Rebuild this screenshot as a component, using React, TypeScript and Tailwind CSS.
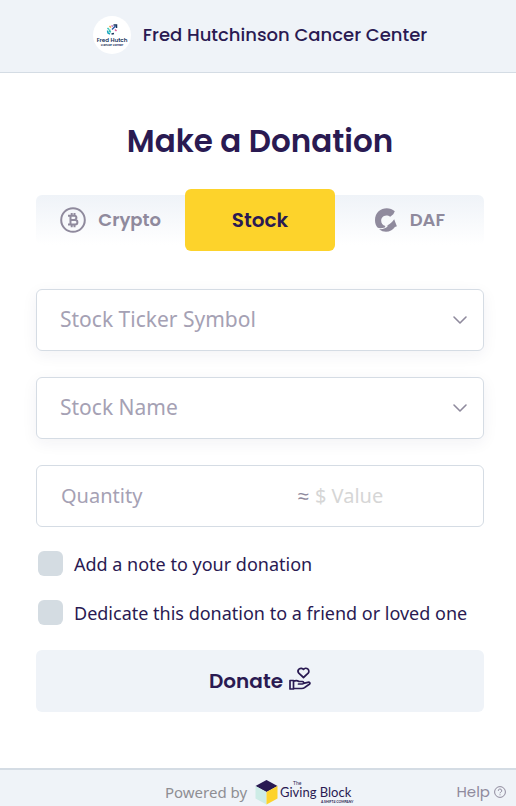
import React, { useState } from 'react';

type Tab = 'crypto' | 'stock' | 'daf';

const HEADING = "font-['Poppins','Inter',sans-serif]";

function OrgLogo() {
  return (
    <svg className="size-[38px] shrink-0" viewBox="0 0 38 38" role="img" aria-label="Fred Hutch Cancer Center">
      <circle cx="19" cy="19" r="19" fill="#fff" />
      <g fill="none" strokeWidth="1.5">
        <path d="M14.500 12l1.500 1.500" stroke="#35c4b5" />
        <path d="M16.500 10l1.500 1.500" stroke="#f2a33a" />
        <path d="M18.500 9.500l1.500 1" stroke="#b45bb5" />
        <path d="M20.500 9h3v3" stroke="#1b365d" />
        <path d="M19 13.500l3.500-3.500" stroke="#2b57a5" />
        <path d="M14.500 14.500l.5 2.500 2 1" stroke="#1aa5c0" />
        <path d="M17 13.500l-.5 2 1.500.5" stroke="#35c4b5" />
        <path d="M18.500 18l2.500-.5" stroke="#1b365d" />
        <path d="M22 13.500l1.500 1.500" stroke="#e0559a" />
      </g>
      <text x="19" y="26" textAnchor="middle" fontSize="5.6" fontWeight="600" fill="#1b365d" fontFamily="Poppins, Inter, sans-serif">Fred Hutch</text>
      <text x="19" y="30" textAnchor="middle" fontSize="3" fontWeight="600" fill="#1b365d" fontFamily="Poppins, Inter, sans-serif">Cancer Center</text>
    </svg>
  );
}

function BitcoinIcon() {
  return (
    <svg className="size-[26px]" viewBox="0 0 26 26" fill="none" stroke="currentColor" aria-hidden="true">
      <circle cx="13" cy="13" r="11.800" strokeWidth="2" />
      <path d="M8 8.700h6.300a2.100 2.100 0 0 1 0 4.200h-3.800h4.600a2.300 2.300 0 0 1 0 4.600H8M10.500 8.700v8.800M11.700 6v2.700M14.500 6v2.700M11.700 17.500v2.700M14.500 17.500v2.700" strokeWidth="2" />
    </svg>
  );
}

function DafIcon() {
  return (
    <svg className="h-[26px] w-6" viewBox="0 0 24 26" fill="currentColor" aria-hidden="true">
      <path d="M20.800 4.200C14-2 1 1.500 1 13.200c0 3 1 5.600 2.800 7.600 2 .6 4.500.4 7-.4l.6-1.500C5.500 18 5.800 8.600 12.300 8.500c1.600 0 2.800.4 3.900 1.300l3.100-2.600z" />
      <path d="M5 22.200c4 .2 7.300-.8 9.200-3.700l-1.700.2c3.500-1.500 5.700-3.400 7.700-6.400l.9 2.500 1.800 4.500-2 .6C17.500 25 10.500 26.500 5 22.200z" />
    </svg>
  );
}

function Chevron() {
  return (
    <svg className="pointer-events-none absolute top-1/2 right-4 w-4 -translate-y-1/2" viewBox="0 0 16 10" fill="none" aria-hidden="true">
      <path d="M2 2l6 6 6-6" stroke="#8f8a9d" strokeWidth="1.600" strokeLinecap="round" strokeLinejoin="round" />
    </svg>
  );
}

function DonateIcon() {
  return (
    <svg className="mb-1 h-6 w-[22px]" viewBox="0 0 22 24" fill="none" stroke="currentColor" strokeWidth="1.700" strokeLinecap="round" strokeLinejoin="round" aria-hidden="true">
      <path d="M14.500 10.500L9.800 6.200a2.900 2.900 0 0 1 4.700-3.800 2.900 2.900 0 0 1 4.700 3.800z" />
      <path d="M1 13.500h3.500V22H1zM4.500 14.300c2-1 4-.9 5.500.2h3.500c1.500 0 1.500 2.500 0 2.500H9.500M14.500 16.300l4.300-1c2-.4 2.700 1.100 1.500 2l-4.300 3c-1 .8-2 1.200-3.500 1.200h-8" />
    </svg>
  );
}

function GivingBlockLogo() {
  return (
    <svg className="h-[26px] w-[100px]" viewBox="0 0 100 26" role="img" aria-label="The Giving Block">
      <path d="M11.500 1L22.500 7l-11 6L.5 7z" fill="#2a1a52" />
      <path d="M.5 7l11 6v12.500L.5 19.500z" fill="#cdece6" />
      <path d="M22.500 7l-11 6v12.500l11-6z" fill="#fdd32b" />
      <text x="38" y="6" fontSize="5" fill="#2a1a52" fontFamily="Lato, sans-serif">The</text>
      <text x="25" y="18" fontSize="13" fill="#2a1a52" fontFamily="Lato, sans-serif">Giving Block</text>
      <text x="66" y="24" fontSize="3.4" fontWeight="700" fill="#2a1a52" fontFamily="Lato, sans-serif">A SHIFT4 COMPANY</text>
    </svg>
  );
}

function SelectField({ id, label, options }: { id: string; label: string; options: string[] }) {
  return (
    <div className="relative">
      <select
        id={id}
        aria-label={label}
        defaultValue=""
        className="block h-[62px] w-full appearance-none rounded-md border border-[#d5dce4] bg-white pr-12 pl-[23px] text-[21px] text-[#a5a1b4] shadow-[0_4px_16px_rgba(42,26,82,0.06)]"
      >
        <option value="">{label}</option>
        {options.map((o) => (
          <option key={o}>{o}</option>
        ))}
      </select>
      <Chevron />
    </div>
  );
}

function CheckboxRow({ label }: { label: string }) {
  return (
    <label className="flex items-center gap-[11px] pl-0.5 text-lg leading-6 text-[#2a1a52]">
      <input type="checkbox" className="size-[25px] shrink-0 appearance-none rounded-md bg-[#d4dce2] checked:bg-[#2a1a52]" />
      {label}
    </label>
  );
}

export default function App() {
  const [tab, setTab] = useState<Tab>('stock');

  const tabClass = (t: Tab) =>
    t === tab
      ? 'flex h-[62px] flex-1 items-center justify-center gap-3 rounded-md bg-[#fdd32b] text-xl font-semibold text-[#2a1a52]'
      : 'flex h-[50px] flex-1 items-center justify-center gap-3 text-lg font-semibold text-[#8f8a9d]';

  return (
    <div className="flex min-h-screen flex-col bg-white font-['Noto_Sans',sans-serif]">
      <header className="flex h-[73px] items-center justify-center gap-3 border-b border-[#d4dce4] bg-[#eff3f8] pb-0.5 pl-1">
        <OrgLogo />
        <span className={`${HEADING} text-lg font-medium text-[#2a1a52]`}>Fred Hutchinson Cancer Center</span>
      </header>

      <main className="flex-1 pt-12 pr-8 pb-14 pl-9">
        <h1 className={`${HEADING} text-center text-[31px] leading-10 font-semibold text-[#2a1a52]`}>Make a Donation</h1>

        <div className={`${HEADING} mt-7 flex h-[62px] items-center`}>
          <div className="flex h-[50px] w-full items-center rounded-md bg-linear-to-b from-[#eff3f8] to-white" role="tablist">
            <button type="button" role="tab" aria-selected={tab === 'crypto'} className={tabClass('crypto')} onClick={() => setTab('crypto')}>
              <BitcoinIcon />
              Crypto
            </button>
            <button type="button" role="tab" aria-selected={tab === 'stock'} className={tabClass('stock')} onClick={() => setTab('stock')}>
              Stock
            </button>
            <button type="button" role="tab" aria-selected={tab === 'daf'} className={tabClass('daf')} onClick={() => setTab('daf')}>
              <DafIcon />
              DAF
            </button>
          </div>
        </div>

        <form className="mt-[38px]" onSubmit={(e) => e.preventDefault()}>
          <div className="flex flex-col gap-[26px]">
            <SelectField id="ticker" label="Stock Ticker Symbol" options={['AAPL', 'MSFT', 'VTI']} />
            <SelectField id="stock-name" label="Stock Name" options={['Apple', 'Microsoft', 'Vanguard Total Stock Market']} />
            <div className="flex h-[62px] items-center rounded-md border border-[#d5dce4] bg-white px-6 text-xl">
              <input
                aria-label="Quantity"
                placeholder="Quantity"
                className="w-[237px] min-w-0 outline-none placeholder:text-[#a5a1b4]"
              />
              <span className="mr-1.5 font-light text-[#8f8a9d]">≈</span>
              <input aria-label="Value in dollars" placeholder="$ Value" className="min-w-0 flex-1 outline-none placeholder:text-[#d6d6d6]" />
            </div>
          </div>

          <div className="mt-6 flex flex-col gap-6">
            <CheckboxRow label="Add a note to your donation" />
            <CheckboxRow label="Dedicate this donation to a friend or loved one" />
          </div>

          <button
            type="submit"
            className={`${HEADING} mt-[25px] flex h-[62px] w-full items-center justify-center gap-1.5 rounded-md bg-[#eff3f8] text-xl font-semibold text-[#2a1a52]`}
          >
            Donate
            <DonateIcon />
          </button>
        </form>
      </main>

      <footer className="grid h-[38px] grid-cols-[1fr_auto_1fr] items-center border-t-2 border-[#d4dce4] bg-[#eff3f8] pt-2">
        <span />
        <div className="flex items-center gap-2 pl-1 text-[15px] text-[#8e8e93]">
          Powered by
          <GivingBlockLogo />
        </div>
        <a href="#help" className={`${HEADING} flex items-center justify-end gap-1 pr-2.5 text-[15px] text-[#8f8a9d]`}>
          Help
          <svg className="size-3" viewBox="0 0 12 12" fill="none" stroke="currentColor" aria-hidden="true">
            <circle cx="6" cy="6" r="5.400" />
            <path d="M4.300 4.800a1.700 1.700 0 1 1 2.500 1.400c-.6.300-.8.500-.8 1.100M6 8.300v1" />
          </svg>
        </a>
      </footer>
    </div>
  );
}
